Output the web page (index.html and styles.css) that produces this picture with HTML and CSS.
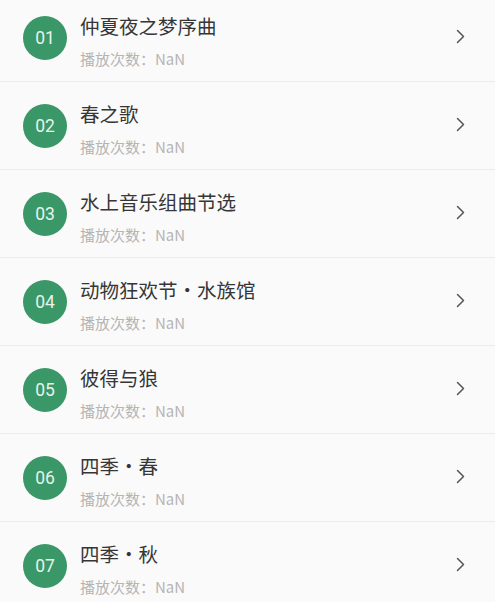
FILE: index.html
```html
<!DOCTYPE html>
<html lang="zh-CN">
<head>
<meta charset="utf-8">
<title>曲目列表</title>
<link rel="stylesheet" href="styles.css">
</head>
<body>
<ul class="list">
  <li class="item">
    <span class="num">01</span>
    <div class="text"><div class="title">仲夏夜之梦序曲</div><div class="sub">播放次数：NaN</div></div>
    <svg class="chev" width="9" height="15" viewBox="0 0 9 15"><polyline points="1.5,1.5 7.5,7.5 1.5,13.5"/></svg>
  </li>
  <li class="item">
    <span class="num">02</span>
    <div class="text"><div class="title">春之歌</div><div class="sub">播放次数：NaN</div></div>
    <svg class="chev" width="9" height="15" viewBox="0 0 9 15"><polyline points="1.5,1.5 7.5,7.5 1.5,13.5"/></svg>
  </li>
  <li class="item">
    <span class="num">03</span>
    <div class="text"><div class="title">水上音乐组曲节选</div><div class="sub">播放次数：NaN</div></div>
    <svg class="chev" width="9" height="15" viewBox="0 0 9 15"><polyline points="1.5,1.5 7.5,7.5 1.5,13.5"/></svg>
  </li>
  <li class="item">
    <span class="num">04</span>
    <div class="text"><div class="title">动物狂欢节・水族馆</div><div class="sub">播放次数：NaN</div></div>
    <svg class="chev" width="9" height="15" viewBox="0 0 9 15"><polyline points="1.5,1.5 7.5,7.5 1.5,13.5"/></svg>
  </li>
  <li class="item">
    <span class="num">05</span>
    <div class="text"><div class="title">彼得与狼</div><div class="sub">播放次数：NaN</div></div>
    <svg class="chev" width="9" height="15" viewBox="0 0 9 15"><polyline points="1.5,1.5 7.5,7.5 1.5,13.5"/></svg>
  </li>
  <li class="item">
    <span class="num">06</span>
    <div class="text"><div class="title">四季・春</div><div class="sub">播放次数：NaN</div></div>
    <svg class="chev" width="9" height="15" viewBox="0 0 9 15"><polyline points="1.5,1.5 7.5,7.5 1.5,13.5"/></svg>
  </li>
  <li class="item">
    <span class="num">07</span>
    <div class="text"><div class="title">四季・秋</div><div class="sub">播放次数：NaN</div></div>
    <svg class="chev" width="9" height="15" viewBox="0 0 9 15"><polyline points="1.5,1.5 7.5,7.5 1.5,13.5"/></svg>
  </li>
</ul>
</body>
</html>
```
FILE: styles.css
```css
html, body {
  margin: 0;
  padding: 0;
  background: #fafafa;
  overflow: hidden;
}
body {
  font-family: "Noto Sans", "Noto Sans CJK SC", sans-serif;
}
.list {
  list-style: none;
  margin: -6px 0 0 0;
  padding: 0;
}
.item {
  display: flex;
  align-items: center;
  height: 87px;
  padding: 0 30px 0 23px;
  border-bottom: 1px solid #ebebeb;
}
.num {
  flex: none;
  width: 44px;
  height: 44px;
  border-radius: 50%;
  background: #3a9767;
  color: #e6f4ea;
  font-family: Roboto, "Noto Sans", sans-serif;
  font-size: 17.5px;
  display: flex;
  align-items: center;
  justify-content: center;
}
.text {
  flex: 1;
  margin-left: 13px;
  padding-top: 5px;
}
.title {
  font-family: "Noto Sans CJK SC", sans-serif;
  font-size: 19.5px;
  line-height: 28px;
  color: #363636;
}
.sub {
  font-family: "Noto Sans CJK SC", sans-serif;
  margin-top: 9px;
  font-size: 15px;
  line-height: 20px;
  color: #b5b5b5;
}
.chev {
  flex: none;
  fill: none;
  stroke: #555555;
  stroke-width: 1.5;
  stroke-linecap: round;
  stroke-linejoin: round;
  margin-top: -2px;
}
```
